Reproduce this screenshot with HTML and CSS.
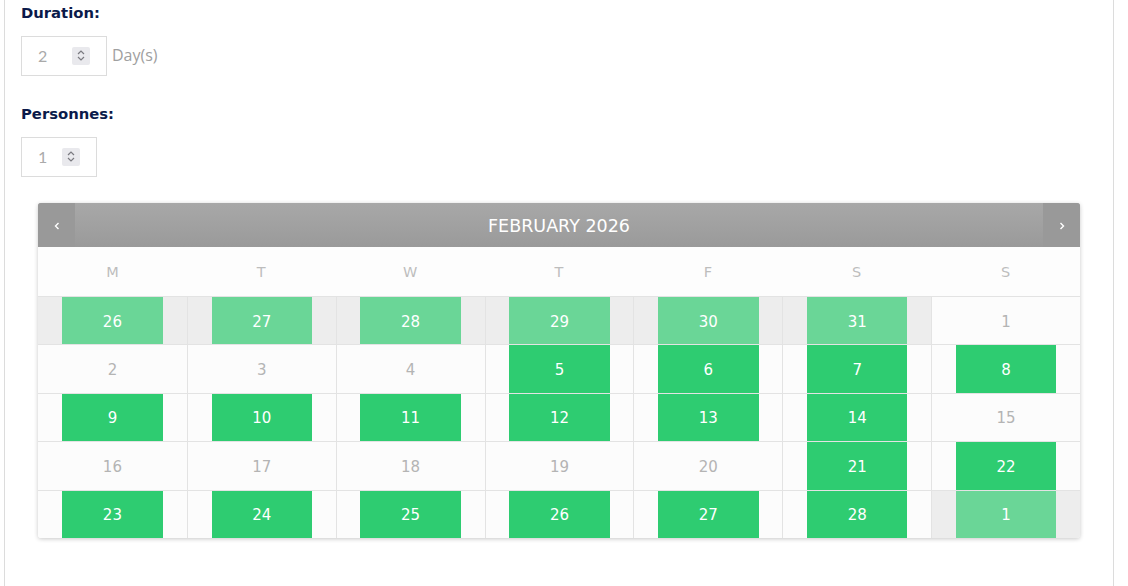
FILE: index.html
```html
<!DOCTYPE html>
<html>
<head>
<meta charset="utf-8">
<link rel="stylesheet" href="styles.css">
</head>
<body>
<div class="panel">
  <div class="label">Duration:</div>
  <div class="field-row">
    <div class="num-input wide">
      <span class="num-val">2</span>
      <span class="spin"><svg width="10" height="13" viewBox="0 0 10 13"><path d="M2 5 L5 2 L8 5" fill="none" stroke="#7a7a80" stroke-width="1.2"/><path d="M2 8 L5 11 L8 8" fill="none" stroke="#7a7a80" stroke-width="1.2"/></svg></span>
    </div>
    <span class="unit">Day(s)</span>
  </div>
  <div class="label second">Personnes:</div>
  <div class="field-row">
    <div class="num-input narrow">
      <span class="num-val">1</span>
      <span class="spin"><svg width="10" height="13" viewBox="0 0 10 13"><path d="M2 5 L5 2 L8 5" fill="none" stroke="#7a7a80" stroke-width="1.2"/><path d="M2 8 L5 11 L8 8" fill="none" stroke="#7a7a80" stroke-width="1.2"/></svg></span>
    </div>
  </div>

  <div class="calendar">
    <div class="cal-head">
      <div class="nav"><svg width="6" height="8" viewBox="0 0 6 8"><path d="M4.5 1 L1.5 4 L4.5 7" fill="none" stroke="#fff" stroke-width="1.4"/></svg></div>
      <div class="title">FEBRUARY 2026</div>
      <div class="nav"><svg width="6" height="8" viewBox="0 0 6 8"><path d="M1.5 1 L4.5 4 L1.5 7" fill="none" stroke="#fff" stroke-width="1.4"/></svg></div>
    </div>
    <div class="weekdays">
      <div>M</div><div>T</div><div>W</div><div>T</div><div>F</div><div>S</div><div>S</div>
    </div>
    <div class="days">
      <div class="cell other"><span class="day soft">26</span></div>
      <div class="cell other"><span class="day soft">27</span></div>
      <div class="cell other"><span class="day soft">28</span></div>
      <div class="cell other"><span class="day soft">29</span></div>
      <div class="cell other"><span class="day soft">30</span></div>
      <div class="cell other"><span class="day soft">31</span></div>
      <div class="cell"><span class="day off">1</span></div>

      <div class="cell"><span class="day off">2</span></div>
      <div class="cell"><span class="day off">3</span></div>
      <div class="cell"><span class="day off">4</span></div>
      <div class="cell"><span class="day on">5</span></div>
      <div class="cell"><span class="day on">6</span></div>
      <div class="cell"><span class="day on">7</span></div>
      <div class="cell"><span class="day on">8</span></div>

      <div class="cell"><span class="day on">9</span></div>
      <div class="cell"><span class="day on">10</span></div>
      <div class="cell"><span class="day on">11</span></div>
      <div class="cell"><span class="day on">12</span></div>
      <div class="cell"><span class="day on">13</span></div>
      <div class="cell"><span class="day on">14</span></div>
      <div class="cell"><span class="day off">15</span></div>

      <div class="cell"><span class="day off">16</span></div>
      <div class="cell"><span class="day off">17</span></div>
      <div class="cell"><span class="day off">18</span></div>
      <div class="cell"><span class="day off">19</span></div>
      <div class="cell"><span class="day off">20</span></div>
      <div class="cell"><span class="day on">21</span></div>
      <div class="cell"><span class="day on">22</span></div>

      <div class="cell"><span class="day on">23</span></div>
      <div class="cell"><span class="day on">24</span></div>
      <div class="cell"><span class="day on">25</span></div>
      <div class="cell"><span class="day on">26</span></div>
      <div class="cell"><span class="day on">27</span></div>
      <div class="cell"><span class="day on">28</span></div>
      <div class="cell other"><span class="day soft">1</span></div>
    </div>
  </div>
</div>
</body>
</html>
```

FILE: styles.css
```css
* { box-sizing: border-box; }
html, body { margin: 0; padding: 0; background: #fff; }
body { height: 586px; overflow: hidden; }

.panel {
  margin-left: 4px;
  width: 1110px;
  height: 600px;
  border-left: 1px solid #dcdcdc;
  border-right: 1px solid #dcdcdc;
  padding: 3px 16px 0 16px;
}

.label {
  font-family: "DejaVu Sans", sans-serif;
  font-weight: bold;
  font-size: 14.8px;
  line-height: 20px;
  height: 20px;
  color: #0b1a4a;
}
.label.second { margin-top: 28px; }

.field-row {
  display: flex;
  align-items: center;
  margin-top: 13px;
}

.num-input {
  height: 40px;
  border: 1px solid #dcdcdc;
  display: flex;
  align-items: center;
  padding-left: 16px;
  padding-bottom: 1px;
  background: #fff;
}
.num-input.wide { width: 86px; }
.num-input.narrow { width: 76px; }
.num-val {
  font-family: "Lato", sans-serif;
  font-size: 16px;
  color: #aaa;
  width: 34px;
}
.num-input.narrow .num-val { width: 24px; }
.spin {
  width: 18px;
  height: 18px;
  background: #e9e9ed;
  border-radius: 2px;
  display: flex;
  align-items: center;
  justify-content: center;
}
.spin svg { display: block; }

.unit {
  font-family: "Open Sans", sans-serif;
  font-size: 16px;
  color: #a0a0a0;
  margin-left: 5px;
  margin-bottom: 2px;
}

.calendar {
  margin: 26px 17px 0 17px;
  width: 1042px;
  border-radius: 3px;
  box-shadow: 0 1px 4px rgba(0,0,0,0.22);
  overflow: hidden;
  font-family: "DejaVu Sans", sans-serif;
  background: #fcfcfc;
}

.cal-head {
  height: 44px;
  display: flex;
  background: linear-gradient(#a8a8a8, #9a9a9a);
}
.nav {
  width: 37px;
  background: #999;
  display: flex;
  align-items: center;
  justify-content: center;
  padding-top: 2px;
}
.title {
  flex: 1;
  text-align: center;
  color: #fff;
  font-size: 17.5px;
  line-height: 47px;
}

.weekdays {
  display: grid;
  grid-template-columns: repeat(7, 1fr);
  height: 49px;
  background: #fdfdfd;
}
.weekdays div {
  text-align: center;
  line-height: 50px;
  font-size: 14.5px;
  color: #bdbdbd;
}

.days {
  display: grid;
  grid-template-columns: repeat(7, 1fr);
  grid-auto-rows: 48.4px;
}
.cell {
  border-top: 1px solid #e3e3e3;
  border-left: 1px solid #e3e3e3;
  background: #fcfcfc;
  display: flex;
  justify-content: center;
}
.cell:nth-child(7n+1) { border-left: none; }
.cell.other { background: #ededed; }

.day {
  width: 68%;
  display: flex;
  align-items: center;
  justify-content: center;
  font-size: 15px;
  padding-top: 2px;
}
.day.on { background: #2ecc71; color: #fff; }
.day.soft { background: #6ad697; color: #fff; }
.day.off { color: #b4b4b4; }
```
